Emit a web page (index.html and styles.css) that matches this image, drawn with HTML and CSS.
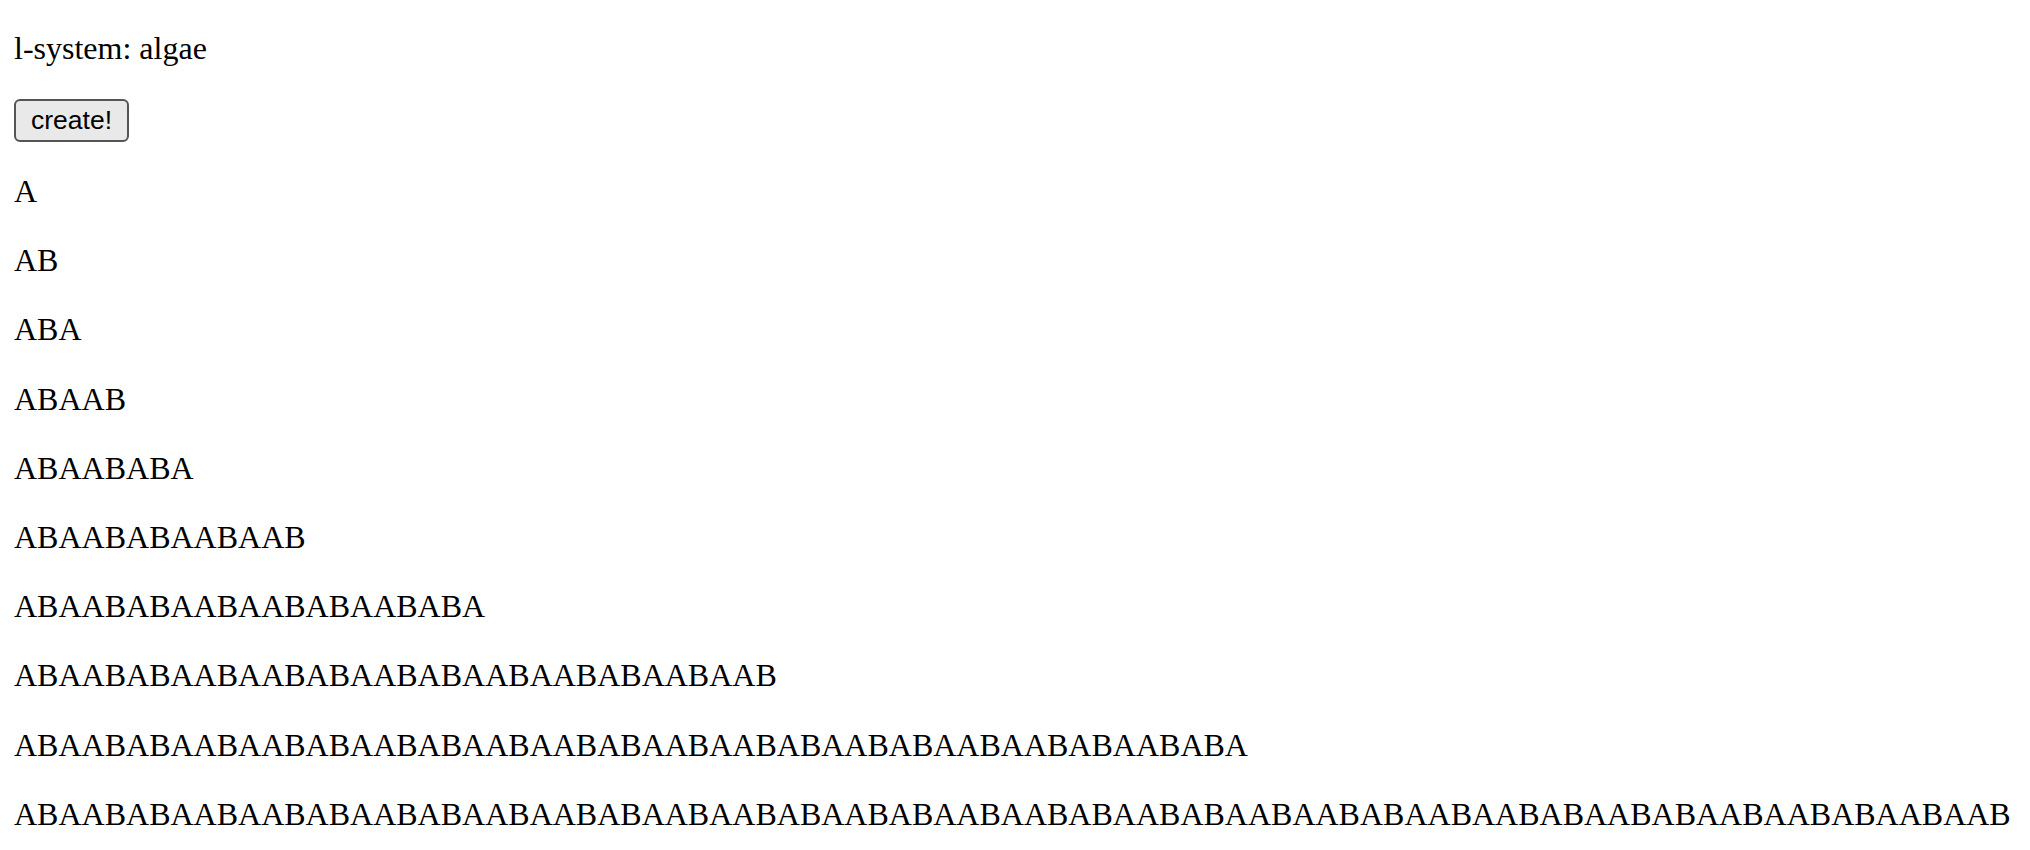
FILE: index.html
```html
<!DOCTYPE html>
<html>
<head>
<meta charset="utf-8">
<link rel="stylesheet" href="styles.css">
</head>
<body>
<main class="page">
  <p class="title">l-system: algae</p>
  <div class="actions"><button class="create">create!</button></div>
  <p class="gen">A</p>
  <p class="gen">AB</p>
  <p class="gen">ABA</p>
  <p class="gen">ABAAB</p>
  <p class="gen">ABAABABA</p>
  <p class="gen">ABAABABAABAAB</p>
  <p class="gen">ABAABABAABAABABAABABA</p>
  <p class="gen">ABAABABAABAABABAABABAABAABABAABAAB</p>
  <p class="gen">ABAABABAABAABABAABABAABAABABAABAABABAABABAABAABABAABABA</p>
  <p class="gen">ABAABABAABAABABAABABAABAABABAABAABABAABABAABAABABAABABAABAABABAABAABABAABABAABAABABAABAAB</p>
</main>
</body>
</html>
```

FILE: styles.css
```css
html, body {
  margin: 0;
  padding: 0;
  background: #fff;
}

.page {
  padding: 30px 14px 0 14px;
  font-family: "Liberation Serif", "Times New Roman", serif;
  font-size: 32px;
  line-height: normal;
  color: #000;
  white-space: nowrap;
}

.title {
  margin: 0 0 32px 0;
}

.actions {
  margin: 0;
  height: 42px;
}

.create {
  display: block;
  box-sizing: border-box;
  width: 115px;
  height: 43px;
  margin: 0;
  padding: 0;
  font-family: "Liberation Sans", Arial, sans-serif;
  font-size: 26.5px;
  color: #000;
  background: #e9e9e9;
  border: 2px solid #555;
  border-radius: 6px;
}

.gen {
  margin: 32px 0 0 0;
  line-height: 37.2px;
}
```
